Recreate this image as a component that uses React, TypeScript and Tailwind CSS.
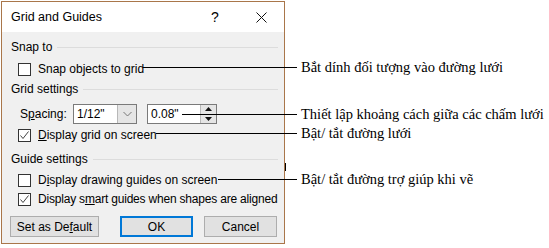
import React from "react";

function Checkbox({ checked }: { checked?: boolean }) {
  return (
    <div className="w-[13px] h-[13px] border border-[#333333] bg-white flex items-center justify-center shrink-0">
      {checked && (
        <svg width="11" height="11" viewBox="0 0 11 11">
          <path d="M1.5 5.5 L4 8.5 L9.5 1.5" fill="none" stroke="#444" strokeWidth="1" />
        </svg>
      )}
    </div>
  );
}

function Section({ title, className }: { title: string; className: string }) {
  return (
    <div className={"h-4 flex items-center gap-[5px] " + className}>
      <span>{title}</span>
      <div className="flex-1 h-px bg-[#dcdcdc]" />
    </div>
  );
}

function Callout({ left, top, width, text }: { left: number; top: number; width: number; text: string }) {
  return (
    <div className="absolute flex items-center" style={{ left, top: top - 10, height: 20 }}>
      <div className="h-px bg-black" style={{ width }} />
      <span className="ml-[4px] text-[14.5px] whitespace-nowrap text-black font-['Liberation_Serif',serif]">{text}</span>
    </div>
  );
}

export default function App() {
  return (
    <div className="relative w-[549px] h-[248px] bg-white overflow-hidden text-black text-[12px] leading-4 font-['Liberation_Sans',Arial,sans-serif]">
      <div className="ml-px mt-px w-[284px] h-[243px] border border-[#a9764a] bg-[#f0f0f0] flex flex-col">
        <div className="h-[30px] bg-white flex items-center shrink-0">
          <span className="flex-1 pl-[9px] text-[12.5px]">Grid and Guides</span>
          <span className="w-[46px] text-center text-[14px]">?</span>
          <span className="w-[46px] flex justify-center">
            <svg width="11" height="11" viewBox="0 0 11 11">
              <path d="M0.5 0.5 L10.5 10.5 M10.5 0.5 L0.5 10.5" stroke="#111" strokeWidth="1" />
            </svg>
          </span>
        </div>

        <div className="pl-[9px] pr-[6px] flex flex-col whitespace-nowrap">
          <Section title="Snap to" className="mt-[7px]" />
          <div className="mt-[6px] h-4 flex items-center gap-[7px] pl-[7px]">
            <Checkbox />
            <span>
              Snap objects to <u>g</u>rid
            </span>
          </div>

          <Section title="Grid settings" className="mt-[4px]" />
          <div className="mt-[7px] h-5 flex items-center pl-[9px]">
            <span className="w-[53px]">
              S<u>p</u>acing:
            </span>
            <div className="w-[64px] h-5 border border-[#7a7a7a] bg-white flex">
              <span className="flex-1 pl-[3px] leading-[18px]">1/12"</span>
              <div className="w-[19px] h-full bg-[#e5e5e5] border-l border-[#b8b8b8] flex items-center justify-center">
                <svg width="9" height="6" viewBox="0 0 9 6">
                  <path d="M0.5 1 L4.5 5 L8.5 1" fill="none" stroke="#777" strokeWidth="1" />
                </svg>
              </div>
            </div>
            <div className="ml-[10px] w-[70px] h-5 border border-[#7a7a7a] bg-white flex">
              <span className="flex-1 pl-[3px] leading-[18px]">0.08"</span>
              <div className="w-[16px] h-full bg-[#e5e5e5] border-l border-[#b8b8b8] flex flex-col">
                <div className="flex-1 flex items-center justify-center border-b border-[#b8b8b8]">
                  <svg width="7" height="4" viewBox="0 0 7 4">
                    <path d="M0 4 L3.5 0 L7 4 Z" fill="#111" />
                  </svg>
                </div>
                <div className="flex-1 flex items-center justify-center">
                  <svg width="7" height="4" viewBox="0 0 7 4">
                    <path d="M0 0 L3.5 4 L7 0 Z" fill="#111" />
                  </svg>
                </div>
              </div>
            </div>
          </div>
          <div className="mt-[3px] h-4 flex items-center gap-[7px] pl-[7px]">
            <Checkbox checked />
            <span>
              <u>D</u>isplay grid on screen
            </span>
          </div>

          <Section title="Guide settings" className="mt-[8px]" />
          <div className="mt-[5px] h-4 flex items-center gap-[7px] pl-[7px]">
            <Checkbox />
            <span>
              D<u>i</u>splay drawing guides on screen
            </span>
          </div>
          <div className="mt-[3px] h-4 flex items-center gap-[7px] pl-[7px]">
            <Checkbox checked />
            <span className="tracking-[-0.2px]">
              Display s<u>m</u>art guides when shapes are aligned
            </span>
          </div>

          <div className="mt-[9px] h-[21px] flex -ml-px">
            <div className="w-[89px] h-full bg-[#e1e1e1] border border-[#adadad] flex items-center justify-center">
              Set as De<u>f</u>ault
            </div>
            <div className="ml-[21px] w-[73px] h-full bg-[#e1e1e1] border-2 border-[#0078d7] flex items-center justify-center">
              OK
            </div>
            <div className="ml-[11px] w-[73px] h-full bg-[#e1e1e1] border border-[#adadad] flex items-center justify-center">
              Cancel
            </div>
          </div>
        </div>
      </div>

      <Callout left={143} top={67} width={154} text="Bắt dính đối tượng vào đường lưới" />
      <Callout left={182} top={114} width={115} text="Thiết lập khoảng cách giữa các chấm lưới" />
      <Callout left={156} top={133} width={141} text="Bật/ tắt đường lưới" />
      <Callout left={218} top={179} width={79} text="Bật/ tắt đường trợ giúp khi vẽ" />
      <div className="absolute left-[285px] top-[163px] w-px h-[8px] bg-black" />
    </div>
  );
}
